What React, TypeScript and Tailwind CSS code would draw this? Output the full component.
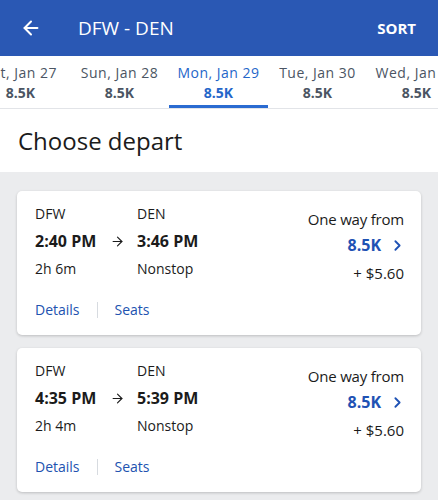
import { ArrowLeft, ArrowRight, ChevronRight } from "lucide-react";

const dates = [
  { label: "Sat, Jan 27", price: "8.5K" },
  { label: "Sun, Jan 28", price: "8.5K" },
  { label: "Mon, Jan 29", price: "8.5K", active: true },
  { label: "Tue, Jan 30", price: "8.5K" },
  { label: "Wed, Jan 31", price: "8.5K" },
];

const flights = [
  { dep: "2:40 PM", arr: "3:46 PM", dur: "2h 6m" },
  { dep: "4:35 PM", arr: "5:39 PM", dur: "2h 4m" },
];

const FlightCard = ({ flight }: { flight: (typeof flights)[number] }) => {
  return (
    <div className="bg-white rounded-[5px] shadow-[0_1px_3px_rgba(0,0,0,0.2)] pl-[18px] pr-[17px] pt-[13px] pb-[15px]">
      <div className="flex justify-between">
        <div className="text-[#1b1b1b]">
          {/* Airports */}
          <div className="flex text-[14px] leading-[20px]">
            <span className="w-[102px]">DFW</span>
            <span>DEN</span>
          </div>
          {/* Times */}
          <div className="flex items-center text-[16px] font-bold leading-[22px] mt-[6px]">
            <span className="w-[75px]">{flight.dep}</span>
            <ArrowRight className="w-[15px] h-[15px] mr-[12px]" strokeWidth={1.8} />
            <span>{flight.arr}</span>
          </div>
          {/* Duration */}
          <div className="flex text-[14px] leading-[20px] mt-[7px]">
            <span className="w-[102px]">{flight.dur}</span>
            <span>Nonstop</span>
          </div>
        </div>

        {/* Price */}
        <div className="flex flex-col items-end text-[#1b1b1b] pt-[5px]">
          <span className="text-[15px] leading-[20px] tracking-[-0.2px]">One way from</span>
          <div className="flex items-center mt-[6px] text-[#1f52b4] font-bold text-[16px] leading-[20px]">
            <span>8.5K</span>
            <ChevronRight className="w-[17px] h-[17px] ml-[8px] -mr-[2px]" strokeWidth={2.6} />
          </div>
          <span className="text-[15px] leading-[20px] mt-[8px]">+ $5.60</span>
        </div>
      </div>

      {/* Links */}
      <div className="flex items-center mt-[17px] text-[14px] leading-[20px] text-[#2152b0]">
        <span>Details</span>
        <span className="w-px h-[16px] bg-[#d7dbe0] mx-[17px]" />
        <span>Seats</span>
      </div>
    </div>
  );
};

export default function App() {
  return (
    <div className="w-[438px] h-[500px] overflow-hidden bg-[#ebecee] font-['Open_Sans','Noto_Sans',sans-serif]">
      {/* Header */}
      <div className="h-[56px] bg-[#2a58b4] flex items-center px-[20px] text-white">
        <ArrowLeft className="w-[22px] h-[22px]" strokeWidth={2.2} />
        <span className="ml-[36px] text-[19px] leading-none">DFW - DEN</span>
        <span className="ml-auto mr-[2px] text-[15px] font-bold leading-none">SORT</span>
      </div>

      {/* Date strip */}
      <div className="bg-white h-[53px] border-b border-[#e2e4e8] overflow-hidden">
        <div className="flex -ml-[29px]">
          {dates.map((d) => (
            <div
              key={d.label}
              className={`w-[99px] shrink-0 flex flex-col items-center h-[52px] pt-[8px] border-b-[3px] ${
                d.active ? "border-[#2a6bd1]" : "border-transparent"
              }`}
            >
              <span
                className={`text-[14px] leading-[18px] whitespace-nowrap tracking-[0.5px] ${
                  d.active ? "text-[#2466c9]" : "text-[#4b5563]"
                }`}
              >
                {d.label}
              </span>
              <span
                className={`text-[14px] font-bold leading-[18px] mt-[2px] ${
                  d.active ? "text-[#2466c9]" : "text-[#4b5563]"
                }`}
              >
                {d.price}
              </span>
            </div>
          ))}
        </div>
      </div>

      {/* Title */}
      <div className="bg-white h-[63px] flex items-center px-[18px]">
        <h1 className="text-[24px] text-[#1b1b1b] leading-none">Choose depart</h1>
      </div>

      {/* Results */}
      <div className="flex flex-col gap-[13px] px-[17px] pt-[19px]">
        {flights.map((f) => (
          <FlightCard key={f.dep} flight={f} />
        ))}
      </div>
    </div>
  );
}
